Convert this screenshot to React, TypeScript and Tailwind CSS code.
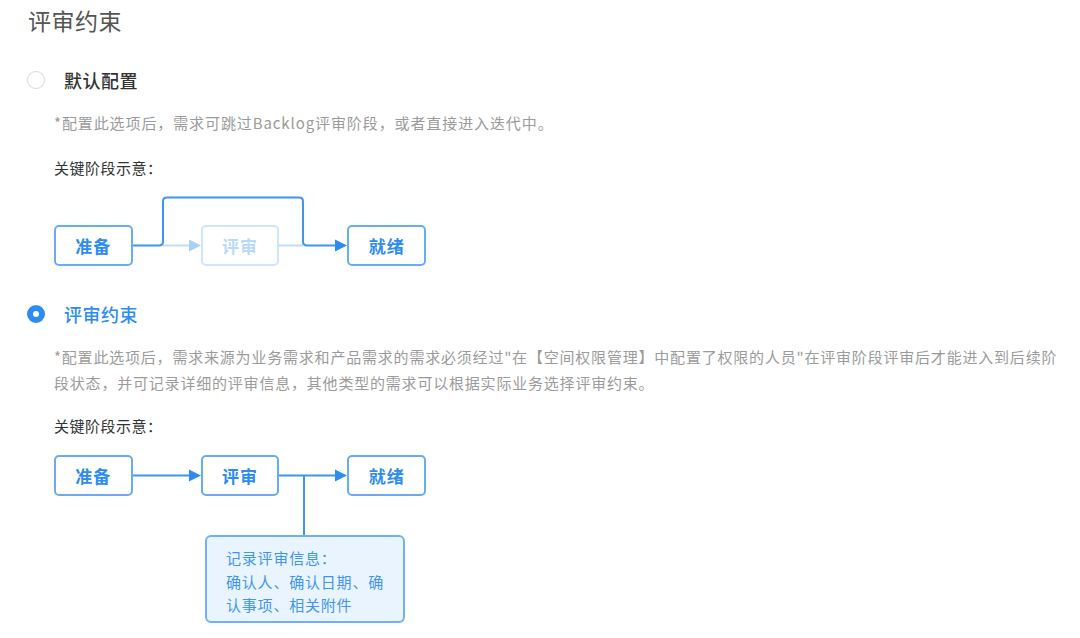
import React from 'react';

const font = { fontFamily: '"Noto Sans CJK SC", "Noto Sans", sans-serif' };

function StageBox({ label, faded }: { label: string; faded?: boolean }) {
  return (
    <div
      className={`w-[79px] h-[41px] rounded-[5px] border-2 bg-white flex items-center justify-center text-[17px] font-semibold tracking-[1px] ${
        faded ? 'border-[#cfe5fc] text-[#b9d9fa]' : 'border-[#66adf5] text-[#2d8cf0]'
      }`}
    >
      {label}
    </div>
  );
}

function StageRow({ fadedMiddle }: { fadedMiddle?: boolean }) {
  return (
    <div className="relative z-10 flex gap-[68px]">
      <StageBox label="准备" />
      <StageBox label="评审" faded={fadedMiddle} />
      <StageBox label="就绪" />
    </div>
  );
}

function Radio({ checked }: { checked?: boolean }) {
  if (checked) {
    return (
      <span className="w-[18px] h-[18px] rounded-full bg-[#2d8cf0] flex items-center justify-center">
        <span className="w-[6px] h-[6px] rounded-full bg-white" />
      </span>
    );
  }
  return <span className="w-[18px] h-[18px] rounded-full border border-[#d7d9e0] bg-white" />;
}

// faint watermarks
const watermarks = [
  { x: 0, y: 255 },
  { x: 643, y: 257 },
  { x: 960, y: 257 },
  { x: 0, y: 583 },
  { x: 640, y: 585 },
  { x: 960, y: 588 },
];

export default function App() {
  return (
    <div className="relative w-[1080px] h-[638px] bg-white overflow-hidden" style={font}>
      <div className="pl-[27px] pt-[4px]">
        <h2 className="ml-[1px] text-[23px] leading-[32px] font-normal text-[#555] tracking-[0.5px]">评审约束</h2>

        {/* 默认配置 */}
        <div className="mt-[32px] flex items-center h-[24px] gap-[19px]">
          <Radio />
          <span className="text-[18px] font-medium text-[#333] tracking-[0.5px]">默认配置</span>
        </div>
        <div className="ml-[27px]">
          <p className="mt-[18px] text-[15px] leading-[26px] text-[#9b9b9b] tracking-[0.9px]">
            *配置此选项后，需求可跳过Backlog评审阶段，或者直接进入迭代中。
          </p>
          <p className="mt-[20px] text-[15px] leading-[24px] text-[#333] tracking-[0.5px]">关键阶段示意：</p>

          <div className="relative mt-[16px] w-[372px] h-[70px] pt-[29px]">
            <svg className="absolute left-0 top-0 z-0" width="372" height="70" viewBox="0 0 372 70">
              <g fill="none" stroke="#bedcfb" strokeWidth="2">
                <path d="M109 49.5 H137" />
                <path d="M225 49.5 H249" />
              </g>
              <polygon points="135,43.5 147,49.5 135,55.5" fill="#a9d0f9" />
              <path
                d="M79 49.5 H105 Q109 49.5 109 45.5 V5.5 Q109 1.5 113 1.5 H245 Q249 1.5 249 5.5 V45.5 Q249 49.5 253 49.5 H283"
                fill="none"
                stroke="#3d96f0"
                strokeWidth="2"
              />
              <polygon points="281,43.5 293,49.5 281,55.5" fill="#2d8cf0" />
            </svg>
            <StageRow fadedMiddle />
          </div>
        </div>

        {/* 评审约束 */}
        <div className="mt-[36px] flex items-center h-[24px] gap-[19px]">
          <Radio checked />
          <span className="text-[18px] font-medium text-[#2d8cf0] tracking-[0.5px]">评审约束</span>
        </div>
        <div className="ml-[27px]">
          <p className="mt-[18px] text-[15px] leading-[26px] text-[#9b9b9b] tracking-[0.8px] whitespace-nowrap">
            *配置此选项后，需求来源为业务需求和产品需求的需求必须经过"在【空间权限管理】中配置了权限的人员"在评审阶段评审后才能进入到后续阶
            <br />
            段状态，并可记录详细的评审信息，其他类型的需求可以根据实际业务选择评审约束。
          </p>
          <p className="mt-[18px] text-[15px] leading-[24px] text-[#333] tracking-[0.5px]">关键阶段示意：</p>

          <div className="relative mt-[17px] w-[372px]">
            <svg className="absolute left-0 top-0 z-0" width="372" height="80" viewBox="0 0 372 80">
              <g fill="none" stroke="#3d96f0" strokeWidth="2">
                <path d="M79 20.5 H137" />
                <path d="M225 20.5 H283" />
                <path d="M250 20.5 V80" />
              </g>
              <polygon points="135,14.5 147,20.5 135,26.5" fill="#2d8cf0" />
              <polygon points="281,14.5 293,20.5 281,26.5" fill="#2d8cf0" />
            </svg>
            <StageRow />
            <div className="relative z-10 mt-[39px] ml-[151px] w-[200px] h-[88px] rounded-[6px] border-2 border-[#6db2f6] bg-[#eaf4fe] pl-[19px] pt-[9px] text-[15px] leading-[23.5px] text-[#3d96f0] tracking-[0.8px] whitespace-nowrap">
              记录评审信息：
              <br />
              确认人、确认日期、确
              <br />
              认事项、相关附件
            </div>
          </div>
        </div>
      </div>

      {watermarks.map((w, i) => (
        <span
          key={i}
          className="pointer-events-none absolute z-20 text-[17px] font-bold text-[#000]/[0.025] -rotate-[20deg] select-none"
          style={{ left: w.x, top: w.y, fontFamily: '"Liberation Sans", sans-serif' }}
        >
          hujun21
        </span>
      ))}
    </div>
  );
}
